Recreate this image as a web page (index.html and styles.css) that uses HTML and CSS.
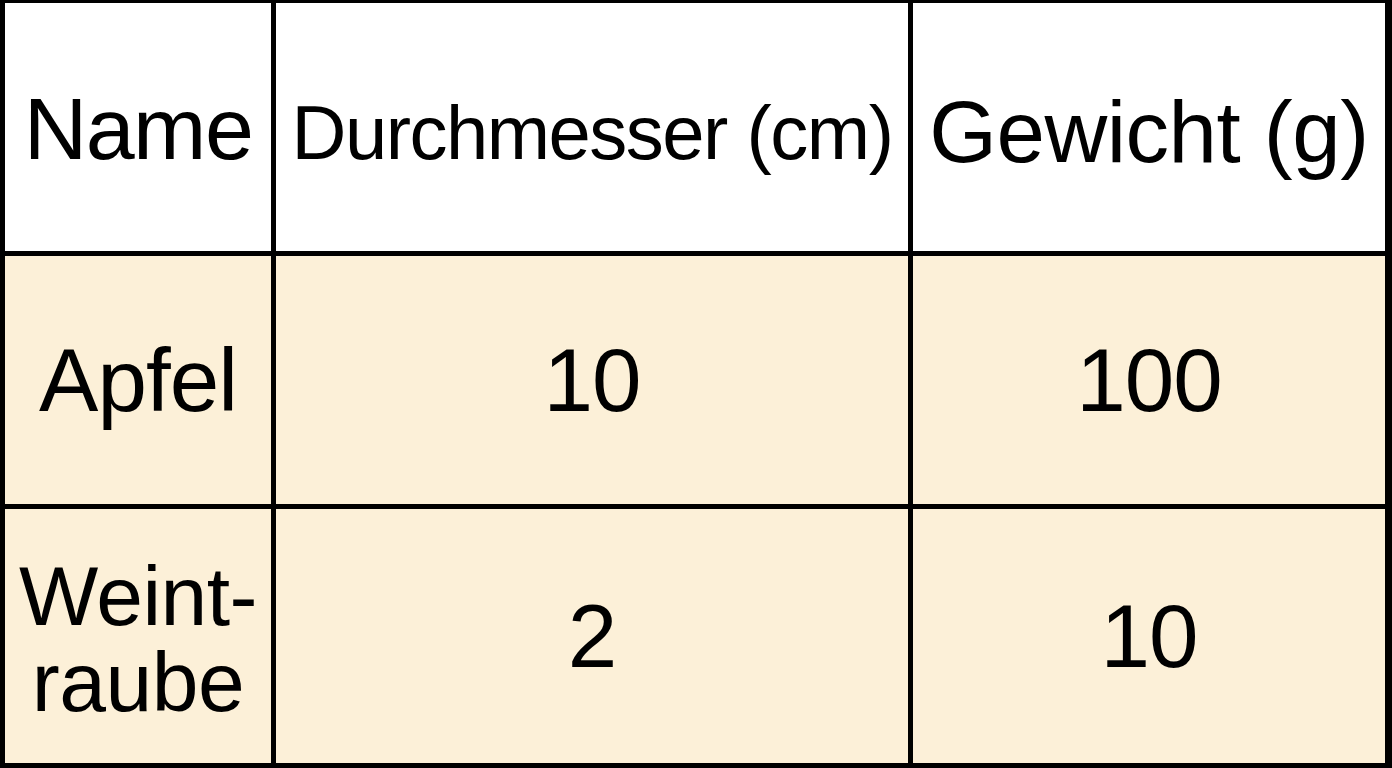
FILE: index.html
```html
<!DOCTYPE html>
<html lang="de">
<head>
<meta charset="utf-8">
<title>Tabelle</title>
<link rel="stylesheet" href="styles.css">
</head>
<body>
<div class="table">
  <div class="cell head"><span class="t-name">Name</span></div>
  <div class="cell head"><span class="t-durch">Durchmesser (cm)</span></div>
  <div class="cell head"><span class="t-gew">Gewicht (g)</span></div>

  <div class="cell body"><span class="t-body">Apfel</span></div>
  <div class="cell body"><span class="t-body">10</span></div>
  <div class="cell body"><span class="t-body">100</span></div>

  <div class="cell body"><span class="t-wrap">Weint-<br>raube</span></div>
  <div class="cell body"><span class="t-body">2</span></div>
  <div class="cell body"><span class="t-body">10</span></div>
</div>
</body>
</html>
```

FILE: styles.css
```css
html, body {
  margin: 0;
  padding: 0;
  background: #000;
}

.table {
  width: 1392px;
  height: 768px;
  box-sizing: border-box;
  background: #000;
  display: grid;
  grid-template-columns: 266px 632px 472px;
  grid-template-rows: 248px 248px 254px;
  gap: 5px;
  padding: 3px 7px 5px 5px;
  font-family: "Liberation Sans", Arial, sans-serif;
  color: #000;
}

.cell {
  display: flex;
  align-items: center;
  justify-content: center;
  text-align: center;
  overflow: hidden;
}

.head {
  background: #ffffff;
}

.body {
  background: #fcf0d8;
}

.t-name {
  font-size: 88px;
  letter-spacing: -1.5px;
  line-height: 1;
  margin-top: 4px;
}

.t-durch {
  font-size: 76px;
  letter-spacing: -1.5px;
  line-height: 1;
  margin-top: 12px;
}

.t-gew {
  font-size: 87px;
  letter-spacing: -0.5px;
  line-height: 1;
  margin-top: 8px;
}

.t-body {
  font-size: 89px;
  letter-spacing: -1px;
  line-height: 1;
}

.t-wrap {
  font-size: 84px;
  letter-spacing: -0.5px;
  line-height: 86px;
  margin-top: 6px;
}
```
